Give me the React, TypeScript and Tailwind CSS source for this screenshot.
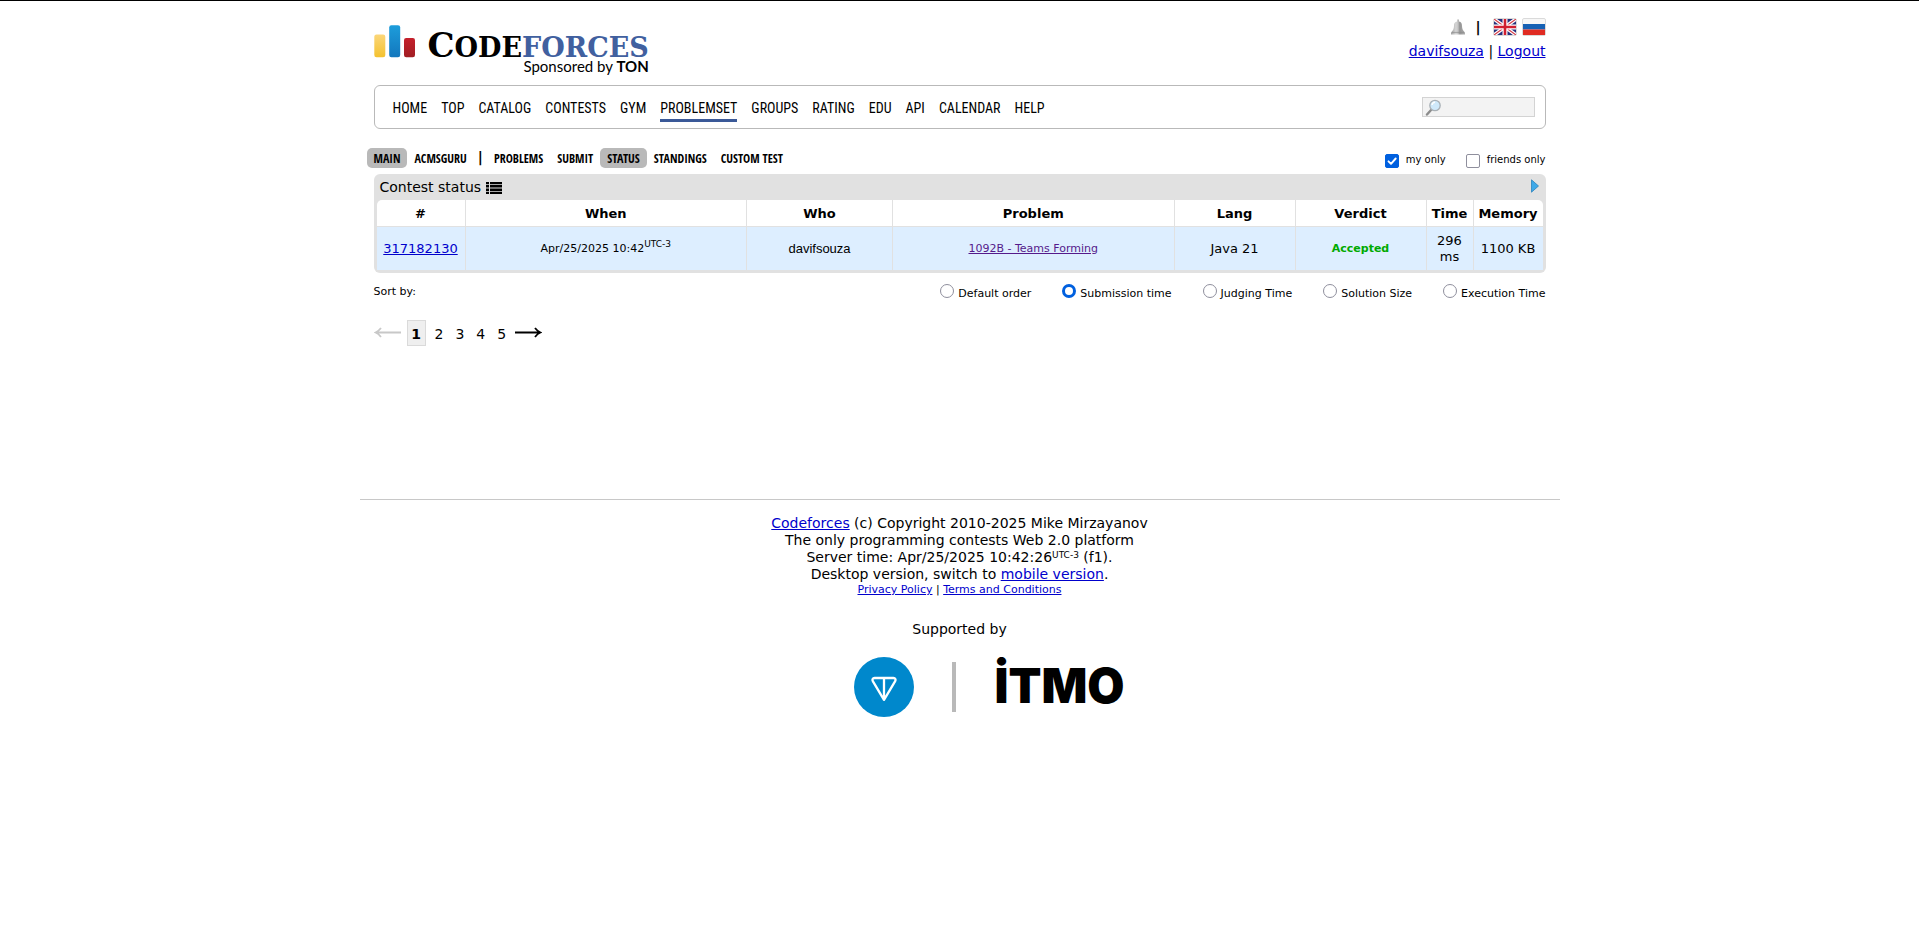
import { useState } from "react";

const menu = [
  "HOME",
  "TOP",
  "CATALOG",
  "CONTESTS",
  "GYM",
  "PROBLEMSET",
  "GROUPS",
  "RATING",
  "EDU",
  "API",
  "CALENDAR",
  "HELP",
];

const sections = ["PROBLEMS", "SUBMIT", "STATUS", "STANDINGS", "CUSTOM TEST"];

const sortOptions = [
  "Default order",
  "Submission time",
  "Judging Time",
  "Solution Size",
  "Execution Time",
];

const link = "text-[#0000cc] underline";

function Bars() {
  return (
    <svg width="42" height="33" viewBox="0 0 42 33" aria-hidden="true">
      <defs>
        <linearGradient id="bar-y" x1="0" y1="0" x2="0" y2="1">
          <stop offset="0" stopColor="#fbd679" />
          <stop offset="1" stopColor="#f4c22f" />
        </linearGradient>
        <linearGradient id="bar-b" x1="0" y1="0" x2="0" y2="1">
          <stop offset="0" stopColor="#1d9ddb" />
          <stop offset="1" stopColor="#1377bd" />
        </linearGradient>
        <linearGradient id="bar-r" x1="0" y1="0" x2="0" y2="1">
          <stop offset="0" stopColor="#c5202c" />
          <stop offset="1" stopColor="#a01e23" />
        </linearGradient>
      </defs>
      <rect x="0.3" y="9.5" width="11" height="22.7" rx="2.2" fill="url(#bar-y)" />
      <rect x="15.2" y="0.3" width="11" height="32" rx="2.2" fill="url(#bar-b)" />
      <rect x="30" y="13" width="11" height="19.2" rx="2.2" fill="url(#bar-r)" />
    </svg>
  );
}

function Bell() {
  return (
    <svg width="16" height="16" viewBox="0 0 16 16" aria-hidden="true">
      <defs>
        <linearGradient id="bell" x1="0" y1="0" x2="1" y2="0">
          <stop offset="0" stopColor="#a0a0a0" />
          <stop offset="0.35" stopColor="#d6d6d6" />
          <stop offset="0.5" stopColor="#c4c4c4" />
          <stop offset="0.62" stopColor="#959595" />
          <stop offset="1" stopColor="#adadad" />
        </linearGradient>
      </defs>
      <path
        d="M7 0.5h2v2C11.300 2.900 12 4.500 12 7C12.100 9.800 13 11.800 15 13.400V15.500H1V13.400C3 11.800 3.900 9.800 4 7C4 4.500 4.700 2.900 7 2.500z"
        fill="url(#bell)"
      />
      <path d="M2 13.400h12" stroke="#8c8c8c" strokeWidth="0.7" />
    </svg>
  );
}

function FlagUK() {
  return (
    <svg width="24" height="18" viewBox="0 0 24 18" aria-hidden="true">
      <rect x="0.5" y="0.5" width="23" height="17" rx="1.5" fill="#fff" stroke="#dadada" />
      <svg x="1" y="1" width="22" height="16" viewBox="0 0 22 16">
        <rect width="22" height="16" fill="#26307c" />
        <path d="M0 0l22 16M22 0L0 16" stroke="#fff" strokeWidth="3.6" />
        <path d="M0 0l22 16M22 0L0 16" stroke="#d6404c" strokeWidth="1.2" />
        <path d="M11 0v16M0 8h22" stroke="#fff" strokeWidth="5" />
        <path d="M11 0v16M0 8h22" stroke="#d01f30" strokeWidth="2.6" />
      </svg>
    </svg>
  );
}

function FlagRU() {
  return (
    <svg width="24" height="18" viewBox="0 0 24 18" aria-hidden="true">
      <rect x="0.5" y="0.5" width="23" height="17" rx="1.5" fill="#f7f7f7" stroke="#dadada" />
      <rect x="1" y="6" width="22" height="5.5" fill="#1661b4" />
      <rect x="1" y="11.500" width="22" height="5.500" fill="#e02b22" />
    </svg>
  );
}

function Magnifier() {
  return (
    <svg width="17" height="17" viewBox="0 0 17 17" className="shrink-0" aria-hidden="true">
      <path d="M6.500 10.500L2 15.500" stroke="#8c8c8c" strokeWidth="2.400" strokeLinecap="round" />
      <circle cx="10" cy="6.500" r="5.200" fill="#cfe9fa" stroke="#a9b0b5" strokeWidth="1.300" />
      <path d="M7 6a3.200 3.200 0 0 1 3-2.800" stroke="#fff" strokeWidth="1.400" fill="none" />
    </svg>
  );
}

function ListIcon() {
  return (
    <svg width="16" height="12" viewBox="0 0 16 12" className="mt-[2px]" aria-hidden="true">
      <path d="M0 1h3M0 4.300h3M0 7.700h3M0 11h3M4 1h12M4 4.300h12M4 7.700h12M4 11h12" stroke="#000" strokeWidth="2.400" />
    </svg>
  );
}

function Arrow({ left = false }: { left?: boolean }) {
  return (
    <svg width="27" height="12" viewBox="0 0 27 12" aria-hidden="true" fill="none">
      {left ? (
        <path d="M27 5.500H2M7 1C5.500 3 4 4.500 1.500 5.500 4 6.500 5.500 8 7 10" stroke="#c8c8c8" strokeWidth="1.800" />
      ) : (
        <path d="M0 5.500h25M20 1C21.500 3 23 4.500 25.500 5.500 23 6.500 21.500 8 20 10" stroke="#000" strokeWidth="1.800" />
      )}
    </svg>
  );
}

function Check({ label, checked, onChange }: { label: string; checked: boolean; onChange: () => void }) {
  return (
    <label className="flex items-center gap-[7px]">
      <span className="mt-[2px] grid h-[14px] w-[14px]">
        <input
          type="checkbox"
          checked={checked}
          onChange={onChange}
          className="col-start-1 row-start-1 appearance-none rounded-[2px] border border-[#8f8f9d] bg-white checked:border-[#0060df] checked:bg-[#0060df]"
        />
        {checked && (
          <svg viewBox="0 0 14 14" className="pointer-events-none col-start-1 row-start-1" aria-hidden="true">
            <path d="M3.500 7.300l2.500 2.500 4.700-5.300" fill="none" stroke="#fff" strokeWidth="1.900" strokeLinecap="round" strokeLinejoin="round" />
          </svg>
        )}
      </span>
      {label}
    </label>
  );
}

function SubLink({ text, active = false }: { text: string; active?: boolean }) {
  return (
    <a href="#" className={active ? "rounded-[5px] bg-[#b9b9b9] px-[7px] pt-[2px]" : "px-[7px] pt-[2px]"}>
      {text}
    </a>
  );
}

export default function App() {
  const [mine, setMine] = useState(true);
  const [friends, setFriends] = useState(false);
  const [sort, setSort] = useState("Submission time");

  return (
    <div className="border-t border-black bg-white font-[Verdana,'DejaVu_Sans',sans-serif] text-[14px] leading-[17px] text-black">
      <div className="mx-auto max-w-[1200px]">
        <div className="px-[14px]">
          <header className="flex h-[84px] items-start justify-between pt-[17px]">
            <a href="#" className="flex pt-[7px]">
              <Bars />
              <span className="ml-3 flex flex-col items-end">
                <span className="flex h-[33px] items-baseline font-['DejaVu_Serif',serif] text-[27px] leading-[41px] font-bold">
                  <span className="text-[34px]">C</span>
                  <span>ODE</span>
                  <span className="text-[#41609f]">FORCES</span>
                </span>
                <span className="font-[Lato,sans-serif] text-[15px] leading-4">
                  Sponsored by <b>TON</b>
                </span>
              </span>
            </a>
            <div className="flex flex-col items-end gap-[7px]">
              <div className="flex items-center">
                <button type="button" aria-label="Notifications">
                  <Bell />
                </button>
                <span className="mr-3 ml-[9px] font-bold">|</span>
                <a href="#" aria-label="In English" className="mr-[5px]">
                  <FlagUK />
                </a>
                <a href="#" aria-label="In Russian">
                  <FlagRU />
                </a>
              </div>
              <div>
                <a href="#" className={link}>davifsouza</a> | <a href="#" className={link}>Logout</a>
              </div>
            </div>
          </header>

          <nav className="flex h-11 items-center justify-between rounded-[6px] border border-[#b9b9b9] pr-[10px] pl-[18px]">
            <ul className="flex gap-[14px] pt-1 font-['Roboto_Condensed',Roboto,sans-serif] text-[14px] leading-[18px]">
              {menu.map((m) => (
                <li key={m}>
                  <a
                    href="#"
                    className={
                      m === "PROBLEMSET"
                        ? "block border-b-3 border-[#3b5998] pt-[3px] pb-[2px]"
                        : "block border-b-3 border-transparent pt-[3px] pb-[2px]"
                    }
                  >
                    {m}
                  </a>
                </li>
              ))}
            </ul>
            <label className="flex h-5 w-[113px] items-center border border-[#d3d3d3] bg-[#f3f3f3] pl-[2px]">
              <Magnifier />
              <input type="text" aria-label="Search" className="w-full min-w-0 bg-transparent text-[12px] outline-none" />
            </label>
          </nav>

          <div className="mt-[19px] flex h-[26px] items-start justify-between">
            <nav className="-ml-[7px] flex font-['Open_Sans_Condensed','Roboto_Condensed',sans-serif] text-[12px] leading-[18px] font-bold">
              <SubLink text="MAIN" active />
              <SubLink text="ACMSGURU" />
              <span className="px-1 font-[Verdana,'DejaVu_Sans',sans-serif] text-[14px]">|</span>
              {sections.map((s) => (
                <SubLink key={s} text={s} active={s === "STATUS"} />
              ))}
            </nav>
            <div className="flex gap-5 pt-[3px] text-[10px]">
              <Check label="my only" checked={mine} onChange={() => setMine(!mine)} />
              <Check label="friends only" checked={friends} onChange={() => setFriends(!friends)} />
            </div>
          </div>

          <section className="rounded-[6px] bg-[#e1e1e1] px-[3px] pb-[3px]">
            <div className="flex h-[26px] items-center justify-between pr-1 pl-[3px]">
              <h1 className="flex items-center gap-[5px]">
                Contest status <ListIcon />
              </h1>
              <button type="button" aria-label="Show filter" className="pb-[3px]">
                <svg width="8" height="14" viewBox="0 0 8 14" aria-hidden="true">
                  <path d="M0.500 0.800L7.500 7 0.500 13.200z" fill="#3fa9e8" stroke="#2a83bd" strokeWidth="0.800" />
                </svg>
              </button>
            </div>
            <table className="w-full table-fixed border-separate border-spacing-0 overflow-hidden rounded-t-[5px] bg-white text-center text-[13px] leading-4 [&_td+td]:border-l [&_td+td]:border-[#e1e1e1] [&_th+th]:border-l [&_th+th]:border-[#e1e1e1]">
              <colgroup>
                <col className="w-[88px]" />
                <col />
                <col className="w-[146px]" />
                <col />
                <col className="w-[121px]" />
                <col className="w-[131px]" />
                <col className="w-[47px]" />
                <col className="w-[70px]" />
              </colgroup>
              <thead>
                <tr className="h-[27px] [&>th]:border-b [&>th]:border-[#e1e1e1] [&>th]:pt-px">
                  <th>#</th>
                  <th>When</th>
                  <th>Who</th>
                  <th>Problem</th>
                  <th>Lang</th>
                  <th>Verdict</th>
                  <th>Time</th>
                  <th>Memory</th>
                </tr>
              </thead>
              <tbody>
                <tr className="h-[43px] bg-[#ddeeff]">
                  <td>
                    <a href="#" className={link}>317182130</a>
                  </td>
                  <td className="text-[11px]">
                    Apr/25/2025 10:42<sup className="text-[9px]">UTC-3</sup>
                  </td>
                  <td className="font-['Liberation_Sans',sans-serif]">
                    <a href="#">davifsouza</a>
                  </td>
                  <td className="text-[11px]">
                    <a href="#" className="text-[#551a8b] underline">1092B - Teams Forming</a>
                  </td>
                  <td>Java 21</td>
                  <td className="text-[11px] font-bold text-[#00aa00]">Accepted</td>
                  <td className="px-1">296 ms</td>
                  <td className="whitespace-nowrap">1100 KB</td>
                </tr>
              </tbody>
            </table>
          </section>

          <fieldset className="flex justify-between pt-[11px] text-[11px] leading-4">
            <span>Sort by:</span>
            <div className="flex gap-[31px]">
              {sortOptions.map((o) => (
                <label key={o} className="flex gap-1 pt-[2px]">
                  <input
                    type="radio"
                    name="sort"
                    checked={sort === o}
                    onChange={() => setSort(o)}
                    className="-mt-[2px] h-[14px] w-[14px] appearance-none rounded-full border border-[#8f8f9d] bg-white checked:border-3 checked:border-[#0060df]"
                  />
                  {o}
                </label>
              ))}
            </div>
          </fieldset>

          <nav className="mt-[18px] flex h-[26px] items-center" aria-label="Pages">
            <Arrow left />
            <b className="mx-[6px] flex h-[26px] w-[19px] items-center justify-center border border-[#dadada] bg-[#efefef] pt-[2px]">1</b>
            <span className="flex gap-3 pt-[2px] pr-[9px] pl-[3px]">
              <a href="#">2</a>
              <a href="#">3</a>
              <a href="#">4</a>
              <a href="#">5</a>
            </span>
            <a href="#" aria-label="Next page">
              <Arrow />
            </a>
          </nav>
        </div>

        <footer className="mt-[153px] border-t border-[#c8c8c8] pt-[15px] text-center">
          <p>
            <a href="#" className={link}>Codeforces</a> (c) Copyright 2010-2025 Mike Mirzayanov
          </p>
          <p>The only programming contests Web 2.0 platform</p>
          <p>
            Server time: Apr/25/2025 10:42:26<sup className="text-[9px]">UTC-3</sup> (f1).
          </p>
          <p>
            Desktop version, switch to <a href="#" className={link}>mobile version</a>.
          </p>
          <p className="text-[11px] leading-[14px]">
            <a href="#" className={link}>Privacy Policy</a> | <a href="#" className={link}>Terms and Conditions</a>
          </p>
          <p className="mt-6">Supported by</p>
          <div className="mt-[19px] flex items-center justify-center pl-[60px]">
            <a href="#" aria-label="TON">
              <svg width="60" height="60" viewBox="0 0 60 60" aria-hidden="true">
                <circle cx="30" cy="30" r="30" fill="#0088cc" />
                <path
                  d="M20.500 21h19c1.800 0 2.600 1.700 1.700 3.200L30 42.800 18.800 24.200c-.9-1.500-.1-3.200 1.700-3.200zM30 21v21"
                  fill="none"
                  stroke="#fff"
                  strokeWidth="2.300"
                  strokeLinejoin="round"
                />
              </svg>
            </a>
            <span className="mx-[38px] h-[50px] w-1 bg-[#b9b9b9]" />
            <a href="#" className="pb-[2px] font-[Inter,sans-serif] text-[48px] leading-[56px] font-black">
              İTMO
            </a>
          </div>
        </footer>
      </div>
    </div>
  );
}
